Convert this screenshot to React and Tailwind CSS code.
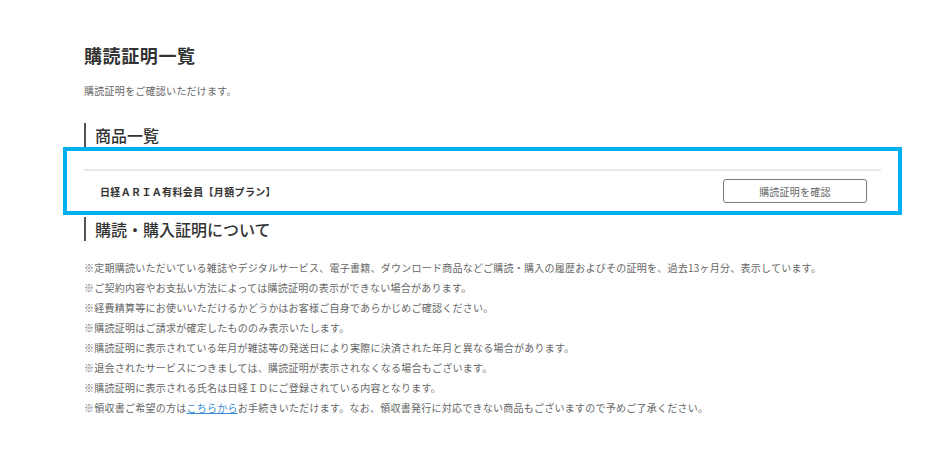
import React from "react";

const notes = [
  "※定期購読いただいている雑誌やデジタルサービス、電子書籍、ダウンロード商品などご購読・購入の履歴およびその証明を、過去13ヶ月分、表示しています。",
  "※ご契約内容やお支払い方法によっては購読証明の表示ができない場合があります。",
  "※経費精算等にお使いいただけるかどうかはお客様ご自身であらかじめご確認ください。",
  "※購読証明はご請求が確定したもののみ表示いたします。",
  "※購読証明に表示されている年月が雑誌等の発送日により実際に決済された年月と異なる場合があります。",
  "※退会されたサービスにつきましては、購読証明が表示されなくなる場合もございます。",
  "※購読証明に表示される氏名は日経ＩＤにご登録されている内容となります。",
];

const SectionTitle = ({ children }) => (
  <h2 className="flex items-center h-[24px] border-l-2 border-[#555] pl-[9px] text-[16px] font-medium leading-none text-[#333]">
    {children}
  </h2>
);

export default function App() {
  return (
    <div
      className="min-h-[456px] bg-white pt-[42px]"
      style={{ fontFamily: '"Noto Sans CJK JP", "Noto Sans", sans-serif' }}
    >
      <div className="ml-[63px] w-[839px]">
        {/* --- PAGE HEADER --- */}
        <div className="px-[21px]">
          <h1 className="text-[18px] font-bold leading-[26px] tracking-[0.6px] text-[#333]">購読証明一覧</h1>
          <p className="mt-[15px] text-[10px] leading-[16px] tracking-[0.25px] text-[#666]">
            購読証明をご確認いただけます。
          </p>
          <div className="mt-[24px]">
            <SectionTitle>商品一覧</SectionTitle>
          </div>
        </div>

        {/* --- PRODUCT LIST --- */}
        <div className="border-4 border-[#00b0f0] px-[17px] pt-[18px] pb-[8px]">
          <div className="h-[2px] bg-[#e8e8e8]" />
          <div className="flex items-center justify-between pt-[8px]">
            <p className="pl-[16px] text-[10px] font-bold tracking-[0.35px] text-[#333]">
              日経ＡＲＩＡ有料会員【月額プラン】
            </p>
            <button className="mr-[14px] h-[24px] w-[144px] rounded-[3px] border border-[#7a7a7a] bg-white text-[10px] tracking-[0.25px] text-[#666]">
              購読証明を確認
            </button>
          </div>
        </div>

        {/* --- NOTES --- */}
        <div className="px-[21px]">
          <div className="mt-[2px]">
            <SectionTitle>購読・購入証明について</SectionTitle>
          </div>
          <ul className="mt-[17px] text-[10px] leading-[20px] tracking-[0.25px] text-[#666]">
            {notes.map((n) => (
              <li key={n}>{n}</li>
            ))}
            <li>
              ※領収書ご希望の方は
              <a href="#" className="text-[#3b8bd6] underline">こちらから</a>
              お手続きいただけます。なお、領収書発行に対応できない商品もございますので予めご了承ください。
            </li>
          </ul>
        </div>
      </div>
    </div>
  );
}
